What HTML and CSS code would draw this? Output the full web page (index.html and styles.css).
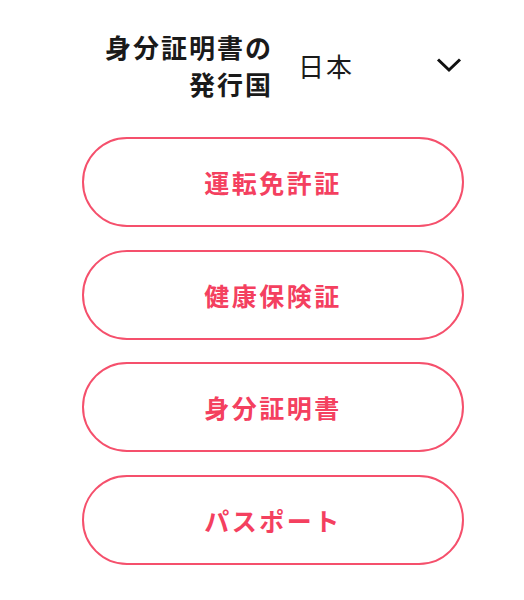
FILE: index.html
```html
<!DOCTYPE html>
<html lang="ja">
<head>
<meta charset="utf-8">
<link rel="stylesheet" href="styles.css">
</head>
<body>
<div class="page">
  <div class="header">
    <div class="label">身分証明書の<br>発行国</div>
    <div class="select">
      <span class="country">日本</span>
      <svg class="chevron" width="26" height="16" viewBox="0 0 26 16"><polyline points="2,2.5 13,13 24,2.5" fill="none" stroke="#111" stroke-width="3"/></svg>
    </div>
  </div>
  <div class="list">
    <div class="btn">運転免許証</div>
    <div class="btn">健康保険証</div>
    <div class="btn">身分証明書</div>
    <div class="btn">パスポート</div>
  </div>
</div>
</body>
</html>
```
FILE: styles.css
```css
html, body {
  margin: 0;
  padding: 0;
  background: #fff;
}
body {
  font-family: "Noto Sans CJK JP", "Noto Sans", sans-serif;
  color: #1a1a1a;
}
.page {
  width: 524px;
  box-sizing: border-box;
  padding: 28px 60px 0 82px;
}
.header {
  display: flex;
  align-items: center;
  height: 74px;
}
.label {
  width: 191px;
  text-align: right;
  font-size: 26px;
  font-weight: 700;
  line-height: 37px;
  letter-spacing: 2px;
}
.select {
  flex: 1;
  margin-left: 25px;
  padding-right: 2px;
  display: flex;
  align-items: center;
  justify-content: space-between;
}
.country {
  font-size: 26px;
  letter-spacing: 2px;
  line-height: 37px;
}
.chevron {
  display: block;
}
.list {
  margin-top: 35px;
  display: flex;
  flex-direction: column;
  gap: 22.5px;
}
.btn {
  height: 90px;
  box-sizing: border-box;
  border: 2px solid #f5506c;
  border-radius: 45px;
  display: flex;
  align-items: center;
  justify-content: center;
  color: #f4405f;
  font-size: 25px;
  font-weight: 700;
  letter-spacing: 2.5px;
  padding-left: 0;
}
```
